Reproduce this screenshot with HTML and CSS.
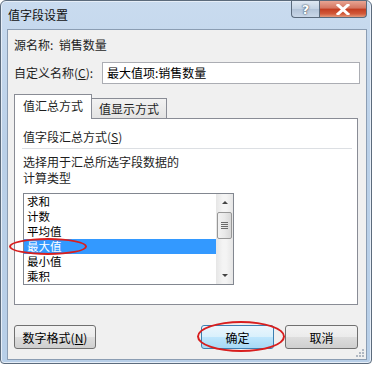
FILE: index.html
```html
<!DOCTYPE html>
<html lang="zh-CN">
<head>
    <meta charset="UTF-8">
    <title>值字段设置</title>
    <link rel="stylesheet" href="styles.css">
</head>
<body>
    <div class="window">
        <div class="titlebar">
            <span class="title">值字段设置</span>
            <div class="caption-buttons">
                <div class="cap-btn help">?</div>
                <div class="cap-btn close">
                    <svg width="14" height="11" viewBox="0 0 14 11">
                        <path d="M2 1 L12 10 M12 1 L2 10" stroke="#ffffff" stroke-width="3" stroke-linecap="square"/>
                    </svg>
                </div>
            </div>
        </div>

        <div class="client">
            <div class="row source">源名称:&nbsp; 销售数量</div>

            <div class="row name-row">
                <label class="name-label">自定义名称(<u>C</u>):</label>
                <div class="textbox">最大值项:销售数量</div>
            </div>

            <!-- tabs -->
            <div class="tabs">
                <div class="tab active">值汇总方式</div>
                <div class="tab">值显示方式</div>
            </div>
            <div class="panel">
                <div class="group-title">值字段汇总方式(<u>S</u>)</div>
                <div class="separator"></div>
                <div class="hint">选择用于汇总所选字段数据的<br>计算类型</div>

                <div class="listbox">
                    <ul class="items">
                        <li>求和</li>
                        <li>计数</li>
                        <li>平均值</li>
                        <li class="selected">最大值</li>
                        <li>最小值</li>
                        <li>乘积</li>
                    </ul>
                    <div class="scrollbar">
                        <div class="arrow up"></div>
                        <div class="thumb">
                            <span></span><span></span><span></span><span></span>
                        </div>
                        <div class="arrow down"></div>
                    </div>
                </div>
            </div>

            <div class="buttons">
                <button class="btn format">数字格式(<u>N</u>)</button>
                <button class="btn default">确定</button>
                <button class="btn">取消</button>
            </div>

            <svg class="grip" width="11" height="11" viewBox="0 0 11 11">
                <g fill="#b0b8c2">
                    <rect x="8" y="2" width="2" height="2"/>
                    <rect x="5" y="5" width="2" height="2"/>
                    <rect x="8" y="5" width="2" height="2"/>
                    <rect x="2" y="8" width="2" height="2"/>
                    <rect x="5" y="8" width="2" height="2"/>
                    <rect x="8" y="8" width="2" height="2"/>
                </g>
            </svg>
        </div>

        <!-- red annotation circles -->
        <div class="mark mark-list"></div>
        <div class="mark mark-ok"></div>
    </div>
</body>
</html>
```

FILE: styles.css
```css
body {
    margin: 0;
    background-color: #ffffff;
    font-family: "Noto Sans CJK SC", "Noto Sans", sans-serif;
    font-size: 12px;
    color: #1e1e1e;
}
.window {
    position: relative;
    width: 372px;
    height: 364px;
    box-sizing: border-box;
    border: 1px solid #5c6b7c;
    border-radius: 6px 6px 4px 4px;
    background: linear-gradient(to bottom, #c9dbef 0%, #bad0e8 40%, #b8cfe8 100%);
    box-shadow: inset 0 0 0 1px #e6eef8;
}
.titlebar {
    display: flex;
    align-items: flex-start;
    height: 28px;
    padding-left: 7px;
}
.title {
    line-height: 28px;
    color: #111;
}
.caption-buttons {
    display: flex;
    margin-left: auto;
    margin-right: 4px;
}
.cap-btn {
    height: 17px;
    border: 1px solid #5a6a7c;
    border-top: none;
    display: flex;
    align-items: center;
    justify-content: center;
    box-sizing: border-box;
}
.help {
    width: 28px;
    border-radius: 0 0 0 4px;
    border-right: none;
    background: linear-gradient(to bottom, #dfe8f2 0%, #c3d2e3 50%, #b2c3d8 51%, #c9d7e8 100%);
    color: #ffffff;
    font-family: "DejaVu Sans", sans-serif;
    font-weight: bold;
    font-size: 13px;
    text-shadow: 0 0 2px #3b4b5c, 0 0 1px #3b4b5c;
}
.close {
    width: 48px;
    border-radius: 0 0 4px 0;
    background: linear-gradient(to bottom, #e8a493 0%, #d47560 45%, #c23c20 50%, #d2593a 80%, #e49a7c 100%);
}
.client {
    position: relative;
    width: 360px;
    height: 331px;
    box-sizing: border-box;
    margin-left: 6px;
    padding: 0 6px;
    background-color: #f0f0f0;
    border: 1px solid #8b9db3;
}
.row {
    line-height: 16px;
}
.source {
    margin-top: 7px;
}
.name-row {
    display: flex;
    align-items: center;
    margin-top: 9px;
}
.name-label {
    width: 88px;
}
.textbox {
    width: 258px;
    height: 22px;
    box-sizing: border-box;
    border: 1px solid #abadb3;
    background-color: #fff;
    padding-left: 4px;
    line-height: 20px;
    color: #000;
}
.tabs {
    display: flex;
    align-items: flex-end;
    margin-top: 10px;
    height: 25px;
    margin-bottom: -1px;
    position: relative;
    z-index: 1;
}
.tab {
    box-sizing: border-box;
    height: 21px;
    width: 75px;
    border: 1px solid #898c95;
    border-left: none;
    background: linear-gradient(to bottom, #f2f2f2, #e3e3e3);
    text-align: center;
    line-height: 20px;
}
.tab.active {
    width: 78px;
    height: 25px;
    border-left: 1px solid #898c95;
    border-bottom: none;
    background: #ffffff;
    line-height: 22px;
}
.panel {
    width: 344px;
    height: 187px;
    box-sizing: border-box;
    border: 1px solid #898c95;
    background-color: #fff;
    padding: 10px 5px 0 8px;
}
.group-title {
    line-height: 16px;
}
.separator {
    height: 1px;
    margin: 3px 0 0 -1px;
    background-color: #dcdfe3;
}
.hint {
    margin-top: 5px;
    line-height: 16px;
}
.listbox {
    display: flex;
    width: 211px;
    height: 92px;
    box-sizing: border-box;
    margin-top: 7px;
    border: 1px solid #828790;
}
.items {
    flex: 1;
    margin: 0;
    padding: 0;
    list-style: none;
    font-size: 11.5px;
}
.items li {
    height: 15px;
    line-height: 15px;
    padding-left: 3px;
    color: #000;
}
.items li.selected {
    background-color: #3399ff;
    color: #fff;
}
.scrollbar {
    position: relative;
    width: 17px;
    background: linear-gradient(to right, #e6e6e6, #f4f4f4 40%, #f4f4f4 60%, #e6e6e6);
}
.arrow {
    position: absolute;
    left: 6px;
    width: 0;
    height: 0;
    border-left: 3px solid transparent;
    border-right: 3px solid transparent;
}
.arrow.up {
    top: 7px;
    border-bottom: 3px solid #444;
}
.arrow.down {
    bottom: 7px;
    border-top: 3px solid #444;
}
.thumb {
    position: absolute;
    top: 18px;
    left: 1px;
    width: 15px;
    height: 27px;
    box-sizing: border-box;
    border: 1px solid #979797;
    border-radius: 2px;
    background: linear-gradient(to right, #f2f2f2, #e9e9e9 50%, #d8d8d8);
    display: flex;
    flex-direction: column;
    align-items: center;
    justify-content: center;
    gap: 1px;
}
.thumb span {
    width: 7px;
    height: 1px;
    background-color: #6a6a6a;
}
.buttons {
    display: flex;
    margin-top: 20px;
}
.btn {
    height: 24px;
    width: 73px;
    box-sizing: border-box;
    border: 1px solid #707070;
    border-radius: 3px;
    background: linear-gradient(to bottom, #f3f3f3 0%, #ebebeb 50%, #dddddd 51%, #cfcfcf 100%);
    font-family: inherit;
    font-size: 12px;
    color: #000;
    padding: 0;
}
.btn.format {
    width: 82px;
    margin-right: auto;
}
.btn.default {
    border-color: #3c7fb1;
    background: linear-gradient(to bottom, #eaf6fd 0%, #d9f0fc 50%, #bee6fd 51%, #a7d9f5 100%);
    margin-right: 11px;
}
.buttons .btn:last-child {
    margin-right: 2px;
}
.grip {
    position: absolute;
    right: 1px;
    bottom: 1px;
}
.mark {
    position: absolute;
    border: 2px solid #d81e1e;
    border-radius: 50%;
    box-sizing: border-box;
    z-index: 5;
}
.mark-list {
    left: 8px;
    top: 237px;
    width: 78px;
    height: 17px;
}
.mark-ok {
    left: 196px;
    top: 320px;
    width: 88px;
    height: 31px;
}
```
